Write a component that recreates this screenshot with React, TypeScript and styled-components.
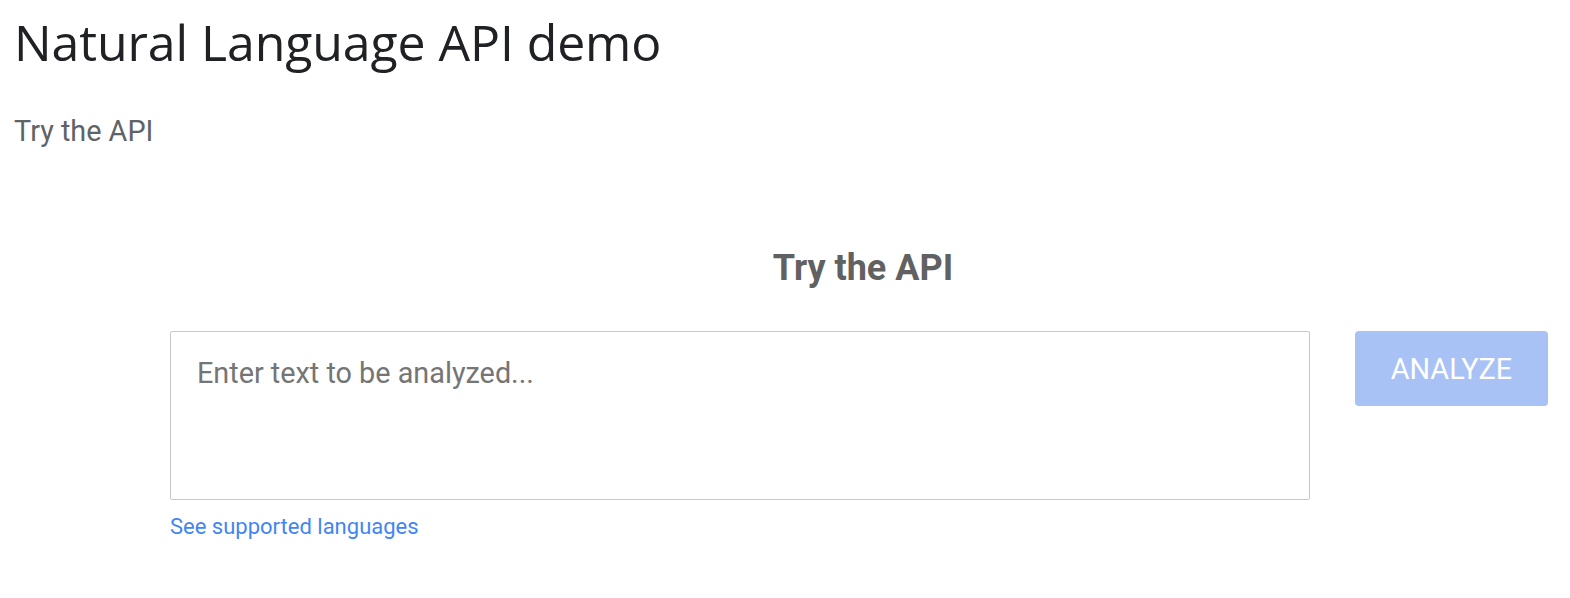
import React, { useState } from 'react';
import styled, { createGlobalStyle } from 'styled-components';

const GlobalStyle = createGlobalStyle`
  html, body {
    margin: 0;
    padding: 0;
    background: #fff;
  }
  body {
    font-family: Roboto, 'Noto Sans', Arial, sans-serif;
  }
`;

function App() {
  const [text, setText] = useState<string>('');

  return (
    <Page>
      <GlobalStyle />
      <Title>Natural Language API demo</Title>
      <Subtitle>Try the API</Subtitle>
      <Demo>
        <DemoTitle>Try the API</DemoTitle>
        <InputRow>
          <InputColumn>
            <TextBox
              value={text}
              placeholder="Enter text to be analyzed..."
              onChange={e => setText(e.target.value)}
            />
            <LangLink href="#">See supported languages</LangLink>
          </InputColumn>
          <AnalyzeBtn disabled={text.length === 0}>ANALYZE</AnalyzeBtn>
        </InputRow>
      </Demo>
    </Page>
  );
}
export default App;

const Page = styled.div`
  padding: 0 14px;
  height: 598px;
  box-sizing: border-box;
`;

const Title = styled.h1`
  margin: 0;
  padding-top: 14px;
  color: #202124;
  font-family: 'Open Sans', Roboto, sans-serif;
  font-size: 50px;
  font-weight: 400;
  line-height: 56px;
  letter-spacing: -0.1px;
`;

const Subtitle = styled.div`
  margin-top: 43px;
  color: #5f6368;
  font-family: Roboto, sans-serif;
  font-size: 28.8px;
  font-weight: 400;
  line-height: 36px;
`;

const Demo = styled.div`
  margin-top: 97px;
  padding-left: 156px;
  padding-right: 8px;
`;

const DemoTitle = styled.div`
  color: #616161;
  font-family: Roboto, sans-serif;
  font-size: 36px;
  font-weight: 700;
  line-height: 44px;
  text-align: center;
  padding-left: 8px;
`;

const InputRow = styled.div`
  margin-top: 41px;
  display: flex;
  align-items: flex-start;
  gap: 45px;
`;

const InputColumn = styled.div`
  flex: 1;
  display: flex;
  flex-direction: column;
`;

const TextBox = styled.textarea`
  box-sizing: border-box;
  width: 100%;
  height: 169px;
  border: 1px solid #c8c8c8;
  border-radius: 2px;
  padding: 23px 26px;
  resize: none;
  outline: none;
  color: #212121;
  font-family: Roboto, sans-serif;
  font-size: 28.8px;
  line-height: 36px;
  &::placeholder {
    color: #757575;
  }
`;

const LangLink = styled.a`
  margin-top: 13px;
  color: #4285f4;
  font-family: Roboto, sans-serif;
  font-size: 22px;
  line-height: 28px;
  text-decoration: none;
  align-self: flex-start;
`;

const AnalyzeBtn = styled.button`
  width: 193px;
  height: 75px;
  border: none;
  border-radius: 4px;
  background: #4285f4;
  color: #fff;
  font-family: Roboto, sans-serif;
  font-size: 28.8px;
  font-weight: 400;
  padding: 0;
  cursor: pointer;
  &:disabled {
    background: #a9c2f6;
    cursor: default;
  }
`;
